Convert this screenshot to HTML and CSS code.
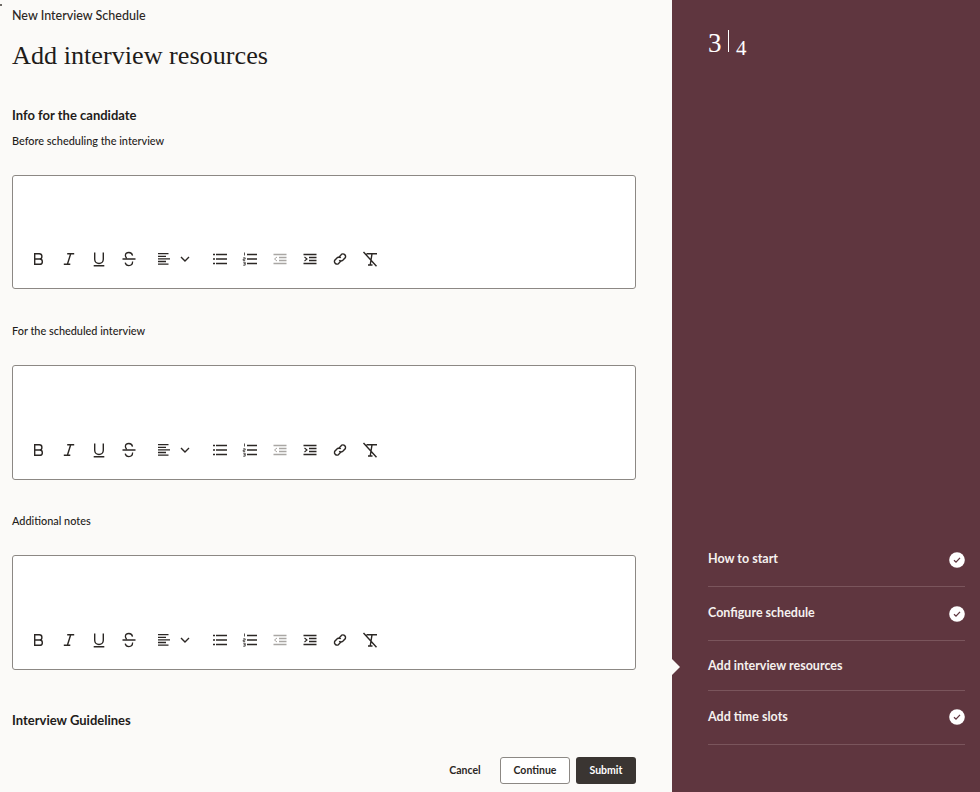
FILE: index.html
```html
<!DOCTYPE html>
<html lang="en">
<head>
<meta charset="utf-8">
<title>Add interview resources</title>
<link rel="stylesheet" href="styles.css">
</head>
<body>
<svg width="0" height="0" class="defs">
  <defs>
    <symbol id="i-b" viewBox="0 0 16 16"><path d="M3.700 2.800h4.600a2.500 2.500 0 0 1 0 5.200h-4.600zM3.700 8h5a2.650 2.650 0 0 1 0 5.300h-5z" fill="none" stroke="currentColor" stroke-width="1.400"/></symbol>
    <symbol id="i-i" viewBox="0 0 16 16"><path d="M6.200 2.800h7M2.800 13.300h6.500M9.700 2.800 6.400 13.300" fill="none" stroke="currentColor" stroke-width="1.400"/></symbol>
    <symbol id="i-u" viewBox="0 0 16 16"><path d="M3.700 1.500v6.700a4.300 4.300 0 0 0 8.600 0V1.500M2.700 14.700h10.600" fill="none" stroke="currentColor" stroke-width="1.400"/></symbol>
    <symbol id="i-s" viewBox="0 0 16 16"><path d="M1.500 8h13M11.500 4.700c-.3-2-1.800-3.200-3.600-3.200-2 0-3.500 1.300-3.500 3 0 1 .5 1.900 1.300 2.500M11.600 10.600c0 2.400-1.700 4-3.700 4-1.900 0-3.300-1.200-3.700-3" fill="none" stroke="currentColor" stroke-width="1.300"/></symbol>
    <symbol id="i-align" viewBox="0 0 16 16"><path d="M2 2.700h10.500M2 5.300h8M2 7.900h12M2 10.500h8M2 13.100h10.500" fill="none" stroke="currentColor" stroke-width="1.300"/></symbol>
    <symbol id="i-chev" viewBox="0 0 12 12"><path d="M2 4l4 4 4-4" fill="none" stroke="currentColor" stroke-width="1.400"/></symbol>
    <symbol id="i-ul" viewBox="0 0 16 16"><path d="M4 3.500h11M4 8h11M4 12.500h11M1 3.500h2M1 8h2M1 12.500h2" fill="none" stroke="currentColor" stroke-width="1.400"/></symbol>
    <symbol id="i-ol" viewBox="0 0 16 16"><path d="M5 3.500h10M5 8h10M5 12.500h10" fill="none" stroke="currentColor" stroke-width="1.400"/><path d="M2.500 1.500v3M1.200 6.800h2v1.300h-2v1.300h2M1.200 11.200h2v3h-2M1.700 12.700h1.500" fill="none" stroke="currentColor" stroke-width=".8"/></symbol>
    <symbol id="i-out" viewBox="0 0 16 16"><path d="M1.500 3.500h13M7 6.500h7.500M7 9.500h7.500M1.500 12.500h13" fill="none" stroke="currentColor" stroke-width="1.300"/><path d="M5 6 2.500 8 5 10" fill="none" stroke="currentColor" stroke-width="1"/></symbol>
    <symbol id="i-in" viewBox="0 0 16 16"><path d="M1.500 3.500h13M7 6.500h7.500M7 9.500h7.500M1.500 12.500h13" fill="none" stroke="currentColor" stroke-width="1.400"/><path d="M2.500 6 5 8 2.500 10" fill="none" stroke="currentColor" stroke-width="1.100"/></symbol>
    <symbol id="i-link" viewBox="0 0 16 16"><path d="M6.500 6.800 9.800 3.100a2.700 2.700 0 0 1 3.600 3.400l-2.600 2.700a2.700 2.700 0 0 1-3.600.1M9.500 9.200 6.200 12.900A2.700 2.700 0 0 1 2.600 9.500l2.600-2.700a2.700 2.700 0 0 1 3.600-.1" fill="none" stroke="currentColor" stroke-width="1.400"/></symbol>
    <symbol id="i-clear" viewBox="0 0 16 16"><path d="M4.500 2.800H15M10 2.800 8.200 14M6 14h4.500M1.500 1l13 14.200" fill="none" stroke="currentColor" stroke-width="1.400"/></symbol>
    <symbol id="i-check" viewBox="0 0 16 16"><circle cx="8" cy="8" r="7.800" fill="#fff"/><path d="M5 8.300 7 10.200 11 5.900" fill="none" stroke="#5f363f" stroke-width="1.300"/></symbol>
  </defs>
</svg>
<span class="speck"></span>
<div class="page">
  <main class="main">
    <div class="crumb">New Interview Schedule</div>
    <h1 class="title">Add interview resources</h1>
    <h2 class="section">Info for the candidate</h2>

    <label class="label first">Before scheduling the interview</label>
    <div class="editor short">
      <div class="toolbar">
        <svg class="ic"><use href="#i-b"/></svg>
        <svg class="ic"><use href="#i-i"/></svg>
        <svg class="ic"><use href="#i-u"/></svg>
        <svg class="ic"><use href="#i-s"/></svg>
        <span class="drop"><svg class="ic"><use href="#i-align"/></svg><svg class="chev"><use href="#i-chev"/></svg></span>
        <svg class="ic"><use href="#i-ul"/></svg>
        <svg class="ic"><use href="#i-ol"/></svg>
        <svg class="ic off"><use href="#i-out"/></svg>
        <svg class="ic"><use href="#i-in"/></svg>
        <svg class="ic"><use href="#i-link"/></svg>
        <svg class="ic"><use href="#i-clear"/></svg>
      </div>
    </div>

    <label class="label after-short">For the scheduled interview</label>
    <div class="editor">
      <div class="toolbar">
        <svg class="ic"><use href="#i-b"/></svg>
        <svg class="ic"><use href="#i-i"/></svg>
        <svg class="ic"><use href="#i-u"/></svg>
        <svg class="ic"><use href="#i-s"/></svg>
        <span class="drop"><svg class="ic"><use href="#i-align"/></svg><svg class="chev"><use href="#i-chev"/></svg></span>
        <svg class="ic"><use href="#i-ul"/></svg>
        <svg class="ic"><use href="#i-ol"/></svg>
        <svg class="ic off"><use href="#i-out"/></svg>
        <svg class="ic"><use href="#i-in"/></svg>
        <svg class="ic"><use href="#i-link"/></svg>
        <svg class="ic"><use href="#i-clear"/></svg>
      </div>
    </div>

    <label class="label">Additional notes</label>
    <div class="editor">
      <div class="toolbar">
        <svg class="ic"><use href="#i-b"/></svg>
        <svg class="ic"><use href="#i-i"/></svg>
        <svg class="ic"><use href="#i-u"/></svg>
        <svg class="ic"><use href="#i-s"/></svg>
        <span class="drop"><svg class="ic"><use href="#i-align"/></svg><svg class="chev"><use href="#i-chev"/></svg></span>
        <svg class="ic"><use href="#i-ul"/></svg>
        <svg class="ic"><use href="#i-ol"/></svg>
        <svg class="ic off"><use href="#i-out"/></svg>
        <svg class="ic"><use href="#i-in"/></svg>
        <svg class="ic"><use href="#i-link"/></svg>
        <svg class="ic"><use href="#i-clear"/></svg>
      </div>
    </div>

    <h2 class="section guidelines">Interview Guidelines</h2>

    <div class="actions">
      <button class="btn link">Cancel</button>
      <button class="btn outline">Continue</button>
      <button class="btn solid">Submit</button>
    </div>
  </main>
  <aside class="side">
    <div class="count"><span class="now">3</span><span class="bar"></span><span class="total">4</span></div>
    <ol class="steps">
      <li class="step s1"><span>How to start</span><svg class="done"><use href="#i-check"/></svg></li>
      <li class="step s2"><span>Configure schedule</span><svg class="done"><use href="#i-check"/></svg></li>
      <li class="step s3 current"><span>Add interview resources</span></li>
      <li class="step s4"><span>Add time slots</span><svg class="done"><use href="#i-check"/></svg></li>
    </ol>
  </aside>
</div>
</body>
</html>
```
FILE: styles.css
```css
* { box-sizing: border-box; }
html, body { margin: 0; padding: 0; height: 100%; }
body { font-family: "Lato", "Noto Sans", sans-serif; color: #1f1c1a; background: #fbfaf8; overflow: hidden; }
.defs { position: absolute; }
.speck { position: absolute; left: 0; top: 4px; width: 2px; height: 2px; background: #6e6a67; }
.page { display: flex; width: 980px; height: 792px; }
.main { width: 672px; height: 792px; padding: 0 36px 0 12px; background: #fbfaf8; display: flex; flex-direction: column; }
.crumb { font-size: 12.500px; line-height: 16px; margin-top: 8px; font-weight: 500; color: #2b2724; }
.title { font-family: "Liberation Serif", serif; font-weight: 400; font-size: 26.200px; line-height: 32px; margin: 16px 0 0; color: #1f1c1a; }
.section { font-size: 13px; line-height: 18px; font-weight: 700; margin: 34px 0 0; color: #1f1c1a; }
.label { display: block; font-size: 10.900px; font-weight: 500; line-height: 14px; height: 14px; margin-top: 34px; color: #1f1c1a; }
.label.first { margin-top: 10px; }
.label.after-short { margin-top: 35px; }
.editor { height: 115px; margin-top: 27px; background: #fff; border: 1px solid #8c8884; border-radius: 3px; display: flex; align-items: flex-end; }
.editor.short { height: 114px; }
.toolbar { display: flex; align-items: center; gap: 14px; padding: 0 0 21px 18px; color: #2b2724; }
.ic { width: 16px; height: 16px; flex: none; }
.ic.off { color: #a9a6a3; }
.drop { display: flex; align-items: center; gap: 7px; margin-left: 5px; margin-right: 7px; }
.chev { width: 12px; height: 12px; }
.guidelines { margin-top: 41px; }
.actions { margin-top: auto; margin-bottom: 8px; display: flex; justify-content: flex-end; align-items: center; gap: 6px; }
.btn { font-family: inherit; font-size: 10.500px; font-weight: 700; height: 27px; border-radius: 3px; padding: 0 0 2px; cursor: pointer; }
.link { background: none; border: 0; color: #2b2724; width: 36px; margin-right: 11px; }
.outline { width: 70px; background: #fff; border: 1px solid #8c8884; color: #2b2724; }
.solid { width: 60px; background: #3a3532; border: 0; color: #fff; }
.side { position: relative; width: 308px; height: 792px; background: #5f363f; color: #fff; padding: 0 15px 0 36px; display: flex; flex-direction: column; }
.count { display: flex; align-items: flex-start; font-family: "Liberation Serif", serif; margin-top: 29px; height: 30px; color: #fff; }
.now { font-size: 27px; line-height: 28px; }
.bar { width: 1.500px; height: 22px; background: #fff; margin: 1px 7px 0 6px; }
.total { font-size: 21px; line-height: 24px; margin-top: 7px; }
.steps { list-style: none; margin: auto 0 47px; padding: 0; }
.step { position: relative; display: flex; justify-content: space-between; align-items: center; font-size: 12.500px; font-weight: 700; border-bottom: 1px solid #7a555c; color: #f5f1ef; }
.s1 { height: 55px; padding-bottom: 2px; }
.s2 { height: 54px; padding-bottom: 2px; }
.s3 { height: 50px; }
.s4 { height: 54px; padding-bottom: 3px; }
.done { width: 16px; height: 16px; flex: none; margin-top: 2px; }
.s1 .done { margin-top: 4px; }
.current::before { content: ""; position: absolute; left: -36px; top: 18px; border-left: 8px solid #fbfaf8; border-top: 8px solid transparent; border-bottom: 8px solid transparent; }
```
